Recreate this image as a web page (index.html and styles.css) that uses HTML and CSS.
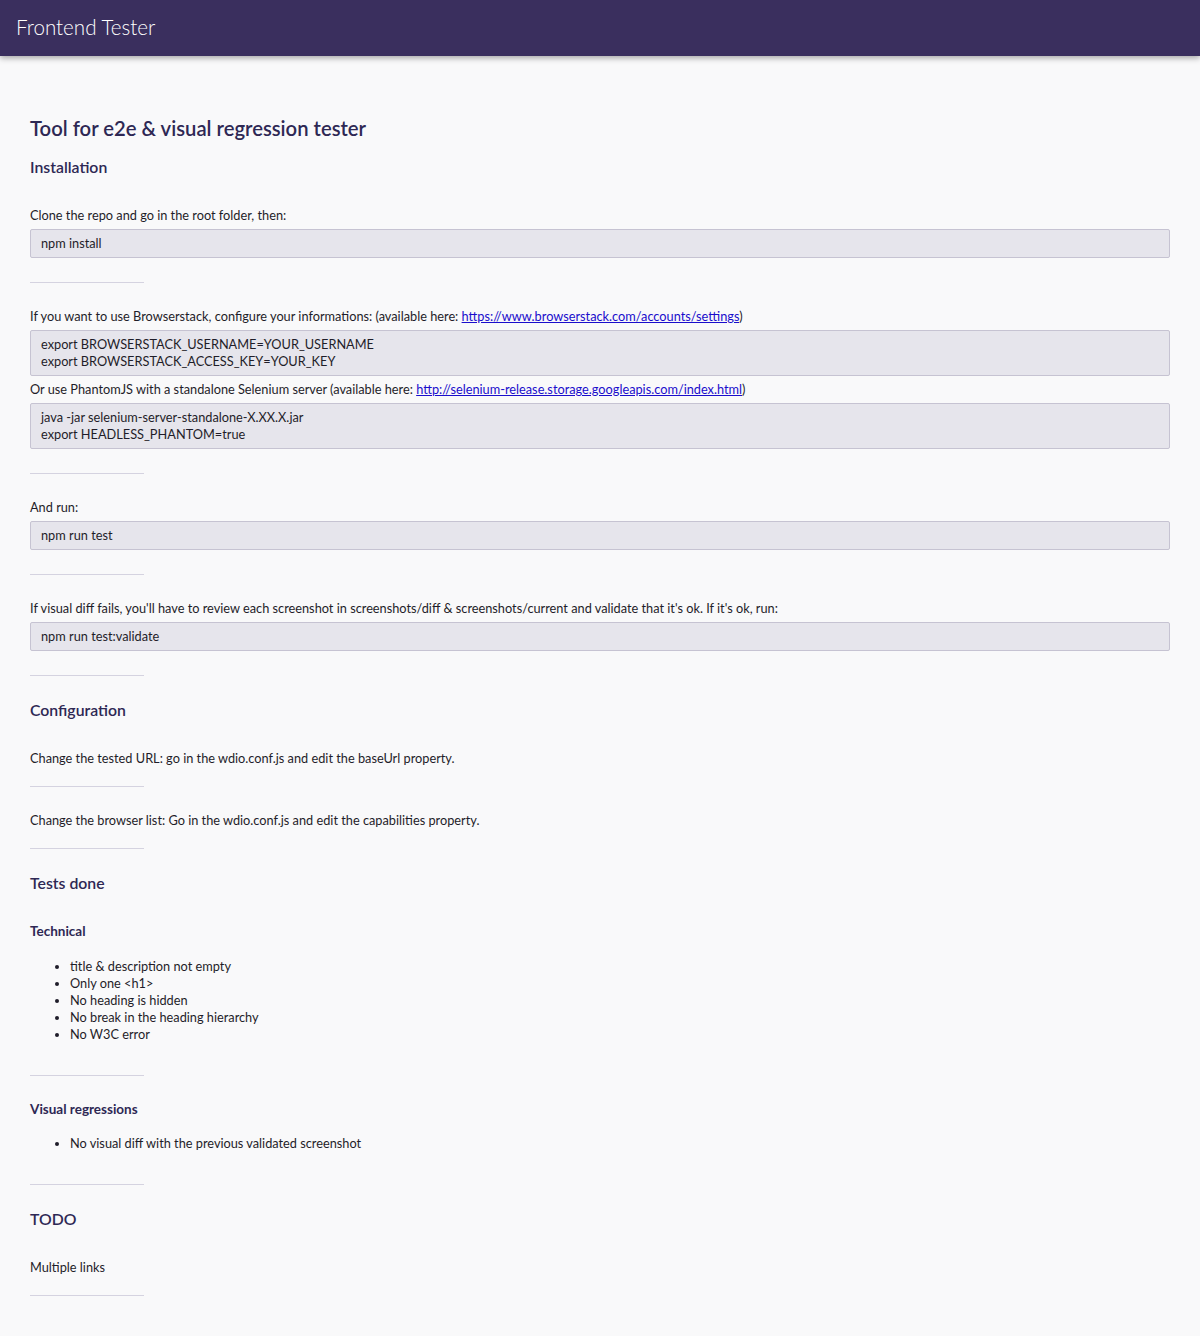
FILE: index.html
```html
<!DOCTYPE html>
<html lang="en">
<head>
<meta charset="utf-8">
<title>Frontend Tester</title>
<link rel="stylesheet" href="styles.css">
</head>
<body>
<header class="topbar">
  <span class="brand">Frontend Tester</span>
</header>
<main class="content">
  <h1 class="title">Tool for e2e &amp; visual regression tester</h1>
  <h2 class="section">Installation</h2>
  <p class="text">Clone the repo and go in the root folder, then:</p>
  <pre class="code">npm install</pre>
  <hr class="sep">
  <p class="text">If you want to use Browserstack, configure your informations: (available here: <a class="link" href="#">https://www.browserstack.com/accounts/settings</a>)</p>
  <pre class="code">export BROWSERSTACK_USERNAME=YOUR_USERNAME
export BROWSERSTACK_ACCESS_KEY=YOUR_KEY</pre>
  <p class="text">Or use PhantomJS with a standalone Selenium server (available here: <a class="link" href="#">http://selenium-release.storage.googleapis.com/index.html</a>)</p>
  <pre class="code">java -jar selenium-server-standalone-X.XX.X.jar
export HEADLESS_PHANTOM=true</pre>
  <hr class="sep">
  <p class="text">And run:</p>
  <pre class="code">npm run test</pre>
  <hr class="sep">
  <p class="text">If visual diff fails, you'll have to review each screenshot in screenshots/diff &amp; screenshots/current and validate that it's ok. If it's ok, run:</p>
  <pre class="code">npm run test:validate</pre>
  <hr class="sep">
  <h2 class="section">Configuration</h2>
  <p class="text end">Change the tested URL: go in the wdio.conf.js and edit the baseUrl property.</p>
  <hr class="sep">
  <p class="text end">Change the browser list: Go in the wdio.conf.js and edit the capabilities property.</p>
  <hr class="sep">
  <h2 class="section">Tests done</h2>
  <h3 class="sub">Technical</h3>
  <ul class="list">
    <li>title &amp; description not empty</li>
    <li>Only one &lt;h1&gt;</li>
    <li>No heading is hidden</li>
    <li>No break in the heading hierarchy</li>
    <li>No W3C error</li>
  </ul>
  <hr class="sep">
  <h3 class="sub">Visual regressions</h3>
  <ul class="list">
    <li>No visual diff with the previous validated screenshot</li>
  </ul>
  <hr class="sep">
  <h2 class="section">TODO</h2>
  <p class="text end">Multiple links</p>
  <hr class="sep">
</main>
</body>
</html>
```
FILE: styles.css
```css
* { box-sizing: border-box; }
html, body {
  margin: 0;
  background: #f9f9fa;
}
body {
  font-family: Lato, "Noto Sans", sans-serif;
  font-size: 12.75px;
  line-height: 17px;
  color: #1f1d29;
}
.topbar {
  height: 56px;
  background: #3a2f5e;
  box-shadow: 0 2px 6px rgba(0, 0, 0, 0.35);
  display: flex;
  align-items: center;
  padding: 0 16px 2px;
}
.brand {
  color: #ffffff;
  font-size: 20.6px;
  font-weight: 300;
  line-height: 24px;
}
.content {
  padding: 60px 30px 40px;
}
.title {
  margin: 0 0 18px;
  font-size: 20.25px;
  line-height: 24px;
  font-weight: 600;
  color: #2e2854;
}
.section {
  margin: 0 0 31px;
  font-size: 15.8px;
  line-height: 18px;
  font-weight: 600;
  color: #2e2854;
}
.sub {
  margin: 0 0 17.5px;
  font-size: 13.5px;
  line-height: 17px;
  font-weight: 700;
  color: #2e2854;
}
.text {
  margin: 0 0 5px;
}
.text.end {
  margin-bottom: 19px;
}
.link {
  color: #1a0dcc;
  text-decoration: underline;
}
.code {
  margin: 0 0 5px;
  padding: 5px 10px;
  background: #e6e5ec;
  border: 1px solid #c6c3d2;
  border-radius: 2px;
  font-family: inherit;
  font-size: 12.75px;
  line-height: 17px;
  white-space: pre;
  color: #1f1d29;
}
.code + .sep { margin-top: 24px; }
.sep {
  width: 114px;
  height: 1px;
  border: 0;
  background: #d5d3e0;
  margin: 0 0 25px;
}
.list {
  margin: 0 0 32px;
  padding-left: 40px;
}
```
